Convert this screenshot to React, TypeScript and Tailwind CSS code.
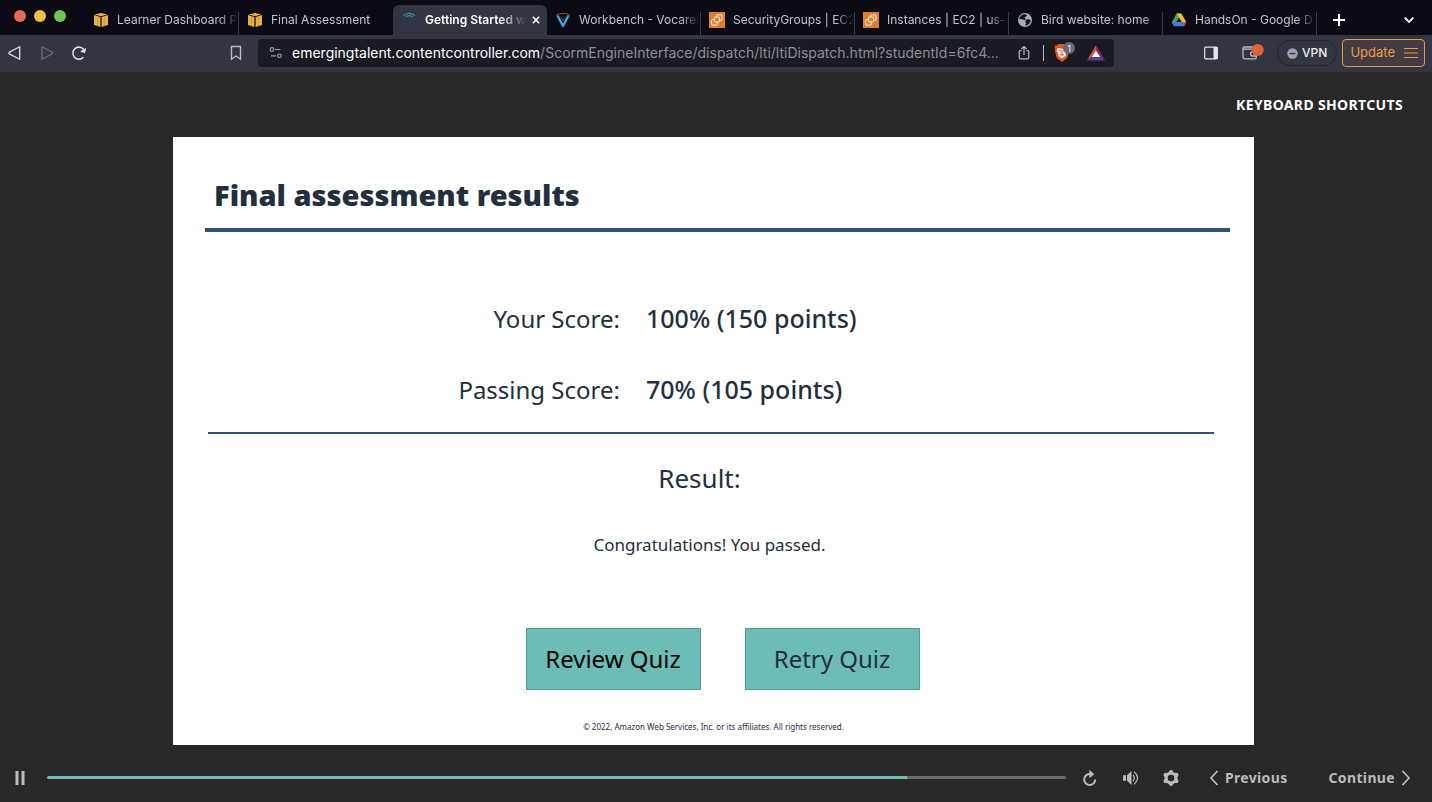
import type { ReactNode } from "react";

const CHROME_FONT = "font-['Inter','Liberation_Sans',sans-serif]";
const COURSE_FONT = "font-['Noto_Sans','Open_Sans',sans-serif]";

function BoxIcon() {
  return (
    <svg width="16" height="16" viewBox="0 0 16 16" aria-hidden="true">
      <path d="M1 3.1v9.8L7.4 15V5zM15 3.1v9.8L8.6 15V5z" fill="#e8b04a" />
      <path d="M1.6 2.5 8 1l6.400 1.500L8 4.300z" fill="#e8b04a" />
      <path d="M4.600 4v10.200M11.400 4v10.200" stroke="#c08f3a" strokeWidth="0.700" />
    </svg>
  );
}

function SpinnerIcon() {
  return (
    <svg width="16" height="16" viewBox="0 0 16 16" fill="none" aria-hidden="true">
      <path d="M13.500 5.500A6 6 0 1 0 13.500 12" stroke="#2c3a54" strokeWidth="2.500" />
      <path d="M2.500 3.800C5 .6 11 .6 14 3.800" stroke="#3f8f99" strokeWidth="1.200" />
      <path d="M4.800 5.200C6.500 3.200 10 3.200 11.800 5.200" stroke="#3f8f99" strokeWidth="1.200" />
    </svg>
  );
}

function VocareumIcon() {
  return (
    <svg width="16" height="16" viewBox="0 0 16 16" fill="none" aria-hidden="true">
      <path d="M1.300 3.800 3.700 3.300 8 11.500l4.300-8.200 2.400.5L8.800 15H7.200z" fill="#4b9fd8" />
      <path d="M1 3.200C5 .9 11 .9 15 3.200" stroke="#a3522f" strokeWidth="1" />
      <path d="M5.800 4.500 8 9l2.200-4.500" stroke="#28507a" strokeWidth="1" />
    </svg>
  );
}

function Ec2Icon() {
  return (
    <svg width="16" height="16" viewBox="0 0 16 16" fill="none" aria-hidden="true">
      <path d="M0 0h16v16H0z" fill="#dd7f2e" />
      <g stroke="#fff" strokeWidth="0.900">
        <rect x="5.500" y="5" width="5" height="5" rx=".8" />
        <path d="M7.500 5V3.500Q7.500 2.800 8.200 2.800h4q.8 0 .8.8v4q0 .8-.8.8h-1.500M5.500 7.500H3.500q-.8 0-.8.8v4q0 .8.8.8h4q.8 0 .8-.8V10" />
      </g>
    </svg>
  );
}

function GlobeIcon() {
  return (
    <svg width="16" height="16" viewBox="0 0 16 16" aria-hidden="true">
      <circle cx="8" cy="8" r="7" fill="#a9acb6" />
      <path d="M8 2.200c1.500.3 2.300 1 1.800 1.800-.6.9-2 .6-2.200 1.600-.1.800 1.400.8 1.200 1.700-.3 1-2 .5-3 .2C4.300 7.100 3 6.600 2.200 7.400 2.300 4.600 4.800 2 8 2.200zM9.500 7.800c1.300-.9 3.200-.3 4.200.8-.3 2.600-2.200 4.600-4.700 5.100-1-.7-.6-1.700.1-2.200.8-.6-.9-.8-.9-1.700 0-.9.600-1.500 1.300-2z" fill="#14151f" />
    </svg>
  );
}

function DriveIcon() {
  return (
    <svg width="16" height="16" viewBox="0 0 16 16" aria-hidden="true">
      <path d="M5.600 1.500h2.500l2.100 3.700-5.100 8.700H3L.8 10z" fill="#3fa358" />
      <path d="M5.600 1.500h4.800L15.200 10h-4.700z" fill="#f3bd2f" />
      <path d="M3 14.200.8 10h14.400L13 14.200z" fill="#4678e0" />
      <path d="m8 5.800 2.500 4.200h-5z" fill="#0c0c16" />
      <path d="m11.500 10h3.700L13 14.200z" fill="#de4a3c" />
    </svg>
  );
}

type TabData = { title: string; icon: ReactNode; active?: boolean; divided?: boolean };

const tabs: TabData[] = [
  { title: "Learner Dashboard P", icon: <BoxIcon />, divided: true },
  { title: "Final Assessment", icon: <BoxIcon /> },
  { title: "Getting Started w", icon: <SpinnerIcon />, active: true },
  { title: "Workbench - Vocareu", icon: <VocareumIcon />, divided: true },
  { title: "SecurityGroups | EC2", icon: <Ec2Icon />, divided: true },
  { title: "Instances | EC2 | us-e", icon: <Ec2Icon />, divided: true },
  { title: "Bird website: home", icon: <GlobeIcon />, divided: true },
  { title: "HandsOn - Google D", icon: <DriveIcon />, divided: true },
];

function Tab({ title, icon, active, divided }: TabData) {
  return (
    <div className={active ? "flex h-[30px] w-[154px] min-w-0 items-center rounded-t-md bg-[#323642] pr-[3px]" : "flex h-[30px] w-[154px] min-w-0 items-center"}>
      <button type="button" className="flex h-full min-w-0 flex-1 items-center gap-2 pl-2 text-left">
        <span className="shrink-0">{icon}</span>
        <span
          className={
            active
              ? "min-w-0 flex-1 overflow-hidden whitespace-nowrap text-[12px] font-semibold text-white [mask-image:linear-gradient(to_right,black_72%,transparent_98%)]"
              : "min-w-0 flex-1 overflow-hidden whitespace-nowrap text-[12px] text-[#c3c3c8] [mask-image:linear-gradient(to_right,black_84%,transparent)]"
          }
        >
          {title}
        </span>
      </button>
      {active && (
        <button type="button" aria-label="Close tab" className="grid size-4 shrink-0 place-items-center text-white">
          <svg width="8" height="8" viewBox="0 0 8 8" stroke="currentColor" strokeWidth="1.600">
            <path d="m.8.8 6.400 6.400M7.200.8.8 7.200" />
          </svg>
        </button>
      )}
      {divided && <span className="mt-[7px] h-[23px] w-px shrink-0 bg-[#3b3c46]" />}
    </div>
  );
}

function TabStrip() {
  return (
    <nav aria-label="Tabs" className="flex h-[35px] items-end bg-[#0b0b15]">
      <div className="flex h-full w-[85px] shrink-0 gap-2 pl-[14px] pt-[10px]">
        <button type="button" aria-label="Close window" className="size-3 rounded-full bg-[#e1695e]" />
        <button type="button" aria-label="Minimise window" className="size-3 rounded-full bg-[#f0bd50]" />
        <button type="button" aria-label="Zoom window" className="size-3 rounded-full bg-[#6dc555]" />
      </div>
      <div className="flex min-w-0">
        {tabs.map((tab) => (
          <Tab key={tab.title} {...tab} />
        ))}
      </div>
      <button type="button" aria-label="New tab" className="ml-[14px] grid h-[30px] w-4 shrink-0 place-items-center text-white">
        <svg width="12" height="12" viewBox="0 0 12 12" stroke="currentColor" strokeWidth="2">
          <path d="M6 0v12M0 6h12" />
        </svg>
      </button>
      <button type="button" aria-label="Search tabs" className="ml-auto mr-[15px] grid h-[30px] w-4 shrink-0 place-items-center text-white">
        <svg width="10" height="6" viewBox="0 0 10 6" fill="none" stroke="currentColor" strokeWidth="1.800">
          <path d="m.7.7 4.300 4.300L9.300.7" />
        </svg>
      </button>
    </nav>
  );
}

function AddressBar() {
  return (
    <div className="flex h-7 min-w-0 flex-1 items-center rounded bg-[#191a22] pl-[11px] pr-2">
      <button type="button" aria-label="Site settings" className="shrink-0">
        <svg width="14" height="14" viewBox="0 0 14 14" fill="none" stroke="#9a9ca4" strokeWidth="1.200">
          <circle cx="3" cy="3.500" r="1.800" />
          <path d="M6 3.500H11.500M2 9.800h5" />
          <circle cx="10.500" cy="9.800" r="1.800" />
        </svg>
      </button>
      <div role="textbox" aria-label="Address" className="ml-[9px] min-w-0 flex-1 truncate text-[14px] leading-5 text-[#8c8d93]">
        <span className="text-white">emergingtalent.contentcontroller.com</span>
        /ScormEngineInterface/dispatch/lti/ltiDispatch.html?studentId=6fc4...
      </div>
      <button type="button" aria-label="Share" className="ml-3 shrink-0">
        <svg width="14" height="16" viewBox="0 0 14 16" fill="none" stroke="#bcbdc2" strokeWidth="1.200">
          <path d="M4.500 5.600H3.300Q2.200 5.600 2.200 6.700v6Q2.200 13.900 3.300 13.900h7.400q1.100 0 1.100-1.200v-6q0-1.100-1.100-1.100H9.500M7 10V1.500M4.300 4.200 7 1.500l2.700 2.700" />
        </svg>
      </button>
      <span className="ml-3 h-4 w-px shrink-0 bg-[#b5b5b8]" />
      <button type="button" aria-label="Shields" className="relative ml-[10px] h-5 w-6 shrink-0">
        <svg width="16" height="20" viewBox="0 0 16 20" aria-hidden="true">
          <path d="M4.500 1h7L13 2.500l1.500-.2.900 2-.6 1.700.4 1.400-2 7.600L8 19l-5.200-4-2-7.600.4-1.400-.6-1.700.9-2L3 2.500z" fill="#e35527" />
          <path d="m3.500 5 4.500.8 4.500-.8.8 2.500-1.800 3.500.5 1.500L8 15.500l-4-3 .5-1.500-1.800-3.500z" fill="#f7efed" />
          <path d="m4.500 7 2.200.8M11.500 7l-2.200.8M8 7.500v3M6.300 11.200 8 12.200l1.700-1" stroke="#e35527" strokeWidth="1.200" fill="none" />
        </svg>
        <span className="absolute -top-px left-[9px] grid size-3 place-items-center rounded-full bg-[#666a75] text-[9px] leading-none text-white">1</span>
      </button>
      <button type="button" aria-label="Rewards" className="ml-2 shrink-0">
        <svg width="20" height="16" viewBox="0 0 20 16" aria-hidden="true">
          <path d="M10 .3 10 5.500 5.800 12 1 15.500z" fill="#e8512c" />
          <path d="M10 .3 19 15.500 14.200 12 10 5.500z" fill="#8a2b63" />
          <path d="M1 15.500 5.800 12h8.400l4.800 3.500z" fill="#5140a8" />
          <path d="m10 5.500 4.200 6.500H5.800z" fill="#fff" />
        </svg>
      </button>
    </div>
  );
}

function Toolbar() {
  return (
    <div className="flex h-[37px] items-center bg-[#323642] pb-px">
      <div className="flex w-[258px] shrink-0 items-center pl-2">
        <button type="button" aria-label="Back" className="text-[#d8d9dc]">
          <svg width="13" height="14" viewBox="0.500 0.500 12 13" fill="none" stroke="currentColor" strokeWidth="1.300" strokeLinejoin="round">
            <path d="M11.300 1.200v11.600L1.700 7.800Q1 7 1.700 6.200z" />
          </svg>
        </button>
        <button type="button" aria-label="Forward" className="ml-5 text-[#666a75]">
          <svg width="13" height="14" viewBox="0.500 0.500 12 13" fill="none" stroke="currentColor" strokeWidth="1.300" strokeLinejoin="round">
            <path d="M1.300 1.200v11.600l9.600-5q.7-.8 0-1.600z" />
          </svg>
        </button>
        <button type="button" aria-label="Reload" className="ml-[17px] text-[#e4e4e6]">
          <svg width="16" height="16" viewBox="0 0 16 16" fill="none" stroke="currentColor" strokeWidth="1.500">
            <path d="M12.300 12.200A6 6 0 1 1 13 5" />
            <path d="M14.500 3.500 13.800 7.500 9.800 6.500z" fill="currentColor" strokeWidth=".8" />
          </svg>
        </button>
        <button type="button" aria-label="Bookmark" className="ml-auto mr-4 text-[#bcbdc2]">
          <svg width="12" height="16" viewBox="0 0 12 16" fill="none" stroke="currentColor" strokeWidth="1.400">
            <path d="M1.500 1.500h9v12.700L6 11l-4.500 3.200z" />
          </svg>
        </button>
      </div>
      <AddressBar />
      <div className="flex w-[318px] shrink-0 items-center justify-end pr-[7px]">
        <button type="button" aria-label="Sidebar" className="mr-6">
          <svg width="14" height="14" viewBox="0 0 14 14" aria-hidden="true">
            <rect x=".7" y="1.200" width="12.600" height="11.600" rx="1" fill="none" stroke="#e4e4e6" strokeWidth="1.200" />
            <path d="M9.500 1h4v12h-4z" fill="#e4e4e6" />
          </svg>
        </button>
        <button type="button" aria-label="Wallet" className="mr-[13px]">
          <svg width="22" height="18" viewBox="0 0 22 18" fill="none" stroke="#bcbdc2" strokeWidth="1.300" aria-hidden="true">
            <path d="M12.500 4.500V4q0-1-1-1h-9Q1 3 1 4.200V13q0 1.800 1.600 1.800h10.200q1.500 0 1.500-1.600V6.500Q14.300 5.200 13 5.200H2.500Q1 5.200 1 4.200M14.300 12h-3.500a2.200 2.200 0 0 1 0-4.400" />
            <circle cx="15.800" cy="6" r="6" fill="#e2603a" stroke="none" />
          </svg>
        </button>
        <button type="button" className="mr-[5px] flex h-[26px] items-center gap-1 rounded-full border border-[#242630] px-[9px] text-[12px] font-medium text-[#ececee]">
          <svg width="11" height="11" viewBox="0 0 11 11" aria-hidden="true">
            <circle cx="5.500" cy="5.500" r="5.200" fill="#9da1b3" />
            <path d="M2.500 5.500h6" stroke="#323642" strokeWidth="1.500" />
          </svg>
          VPN
        </button>
        <button type="button" className="flex h-7 items-center gap-[9px] rounded border border-[#e8984a] bg-[#423c42] pl-[7px] pr-1.5 text-[13px] text-[#e8984a]">
          Update
          <svg width="14" height="12" viewBox="0 0 14 12" stroke="currentColor" strokeWidth="1.200" aria-hidden="true">
            <path d="M0 1.500h14M0 6h14M0 10.500h14" />
          </svg>
        </button>
      </div>
    </div>
  );
}

function Score({ label, value }: { label: string; value: string }) {
  return (
    <div className="grid grid-cols-[412fr_568fr] gap-[26px] leading-[33px]">
      <dt className="text-right text-[24px]">{label}</dt>
      <dd className="text-[25px] font-medium">{value}</dd>
    </div>
  );
}

function Slide() {
  return (
    <main className="ml-[173px] mr-[178px] bg-white pb-3 pl-8 pr-6 text-[#232f3e]">
      <h1 className="border-b-4 border-[#2b5377] pb-[13px] pl-[9px] pt-[38px] text-[29px] font-black leading-10">Final assessment results</h1>
      <dl className="ml-[3px] mr-4 flex flex-col gap-[38px] border-b-2 border-[#2b5377] pb-[26px] pt-[70px]">
        <Score label="Your Score:" value="100% (150 points)" />
        <Score label="Passing Score:" value="70% (105 points)" />
      </dl>
      <h2 className="mr-9 pt-[26px] text-center text-[26px] leading-9">Result:</h2>
      <p className="mr-4 pt-[37px] text-center text-[17px] leading-6">Congratulations! You passed.</p>
      <div className="ml-[10px] mt-[71px] flex justify-center gap-11">
        <button type="button" className="h-[62px] w-[175px] border border-[#559c92] bg-[#6cbdb5] text-[24px] text-black">Review Quiz</button>
        <button type="button" className="h-[62px] w-[175px] border border-[#559c92] bg-[#6cbdb5] text-[24px]">Retry Quiz</button>
      </div>
      <p className="mr-2 pt-[30px] text-center text-[8px] leading-[13px]">© 2022, Amazon Web Services, Inc. or its affiliates. All rights reserved.</p>
    </main>
  );
}

function PlayerBar() {
  return (
    <footer className="flex flex-1 items-center pl-[15px] pr-[21px] pt-2 text-[#bababa]">
      <button type="button" aria-label="Pause" className="shrink-0">
        <svg width="10" height="14" viewBox="0 0 10 14" fill="currentColor">
          <path d="M.5 0h3v14h-3zM6.500 0h3v14h-3z" />
        </svg>
      </button>
      <input
        type="range"
        aria-label="Slide progress"
        min={0}
        max={1000}
        defaultValue={843}
        className="ml-[22px] h-[3px] min-w-0 flex-1 appearance-none rounded-full bg-[linear-gradient(to_right,#6cc0b5_84.400%,#6b6b6b_84.400%)] [&::-webkit-slider-thumb]:size-1 [&::-webkit-slider-thumb]:appearance-none [&::-webkit-slider-thumb]:opacity-0"
      />
      <button type="button" aria-label="Replay" className="ml-4 shrink-0">
        <svg width="16" height="18" viewBox="0 0 16 18" fill="none">
          <path d="M13.200 10.500A5.500 5.500 0 1 1 7.500 5H10" stroke="currentColor" strokeWidth="2" />
          <path d="m7.300 .7 5 4.600-5 4z" fill="currentColor" />
        </svg>
      </button>
      <button type="button" aria-label="Volume" className="ml-6 shrink-0">
        <svg width="18" height="16" viewBox="0 0 18 16" fill="none">
          <path d="M1 5.200h3v5.600H1zM5 5.200 9.500 1v14L5 10.800z" fill="currentColor" />
          <path d="M11 4.800q2.600 3.200 0 6.400M12.200 1.800q6.800 6.200 0 12.400" stroke="currentColor" strokeWidth="1.200" />
        </svg>
      </button>
      <button type="button" aria-label="Settings" className="ml-[22px] shrink-0">
        <svg width="18" height="18" viewBox="0 0 18 18" fill="currentColor">
          <circle cx="9" cy="9" r="4.900" fill="none" stroke="currentColor" strokeWidth="3.200" />
          <circle cx="9" cy="3.100" r="2.100" />
          <circle cx="14.200" cy="6" r="2.300" />
          <circle cx="14.200" cy="12" r="2.300" />
          <circle cx="9" cy="14.900" r="2.100" />
          <circle cx="3.800" cy="12" r="2.300" />
          <circle cx="3.800" cy="6" r="2.300" />
        </svg>
      </button>
      <button type="button" className="ml-[29px] flex shrink-0 items-center gap-1.5 text-[14px] font-bold tracking-wide">
        <svg width="10" height="16" viewBox="0 0 10 16" fill="none" stroke="currentColor" strokeWidth="1.800">
          <path d="M8.500 1 2 8l6.500 7" />
        </svg>
        Previous
      </button>
      <button type="button" className="ml-[41px] flex shrink-0 items-center gap-1.5 text-[14px] font-bold tracking-wide">
        Continue
        <svg width="10" height="16" viewBox="0 0 10 16" fill="none" stroke="currentColor" strokeWidth="1.800">
          <path d="m1.500 1 6.500 7-6.500 7" />
        </svg>
      </button>
    </footer>
  );
}

export default function App() {
  return (
    <div className="flex min-h-screen flex-col bg-[#282828]">
      <header className={CHROME_FONT}>
        <TabStrip />
        <Toolbar />
      </header>
      <div className={`${COURSE_FONT} flex flex-1 flex-col`}>
        <div className="flex h-[65px] items-center justify-end pr-[29px]">
          <button type="button" className="text-[14px] font-bold tracking-wide text-white">KEYBOARD SHORTCUTS</button>
        </div>
        <Slide />
        <PlayerBar />
      </div>
    </div>
  );
}
